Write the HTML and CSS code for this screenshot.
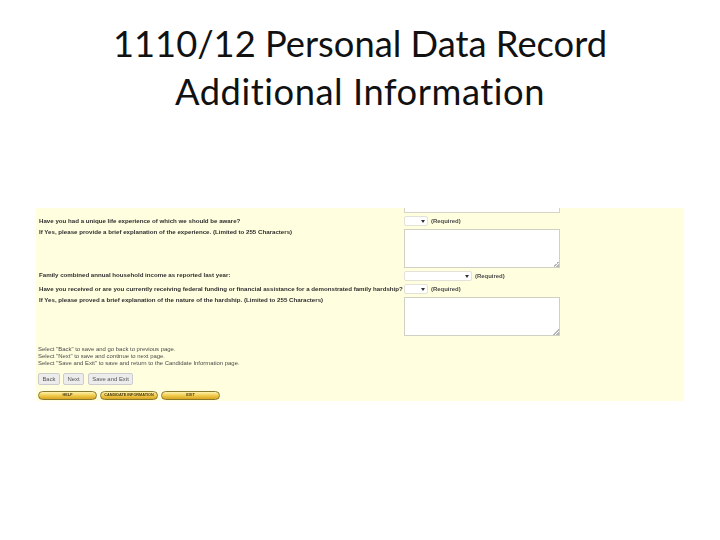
FILE: index.html
```html
<!doctype html>
<html>
  <head>
    <title>1110/12 Personal Data Record</title>
    <link rel="stylesheet" href="styles.css">
  </head>
  <body>
    <h1 class="title">1110/12 Personal Data Record<br><span class="subtitle">Additional Information</span></h1>
    <form class="panel">
      <div class="row row-stub">
        <div></div>
        <div class="stub"></div>
      </div>
      <div class="row row-select">
        <label>Have you had a unique life experience of which we should be aware?</label>
        <div class="field"><span class="pick short"><select></select></span><span class="req">(Required)</span></div>
      </div>
      <div class="row row-area">
        <label>If Yes, please provide a brief explanation of the experience. (Limited to 255 Characters)</label>
        <div class="box"><textarea></textarea></div>
      </div>
      <div class="row row-select row-tight">
        <label>Family combined annual household income as reported last year:</label>
        <div class="field"><span class="pick long"><select></select></span><span class="req">(Required)</span></div>
      </div>
      <div class="row row-select">
        <label>Have you received or are you currently receiving federal funding or financial assistance for a demonstrated family hardship?</label>
        <div class="field"><span class="pick short"><select></select></span><span class="req">(Required)</span></div>
      </div>
      <div class="row row-area">
        <label>If Yes, please proved a brief explanation of the nature of the hardship. (Limited to 255 Characters)</label>
        <div class="box"><textarea></textarea></div>
      </div>
      <div class="notes">
        <p>Select "Back" to save and go back to previous page.</p>
        <p>Select "Next" to save and continue to next page.</p>
        <p>Select "Save and Exit" to save and return to the Candidate Information page.</p>
      </div>
      <div class="buttons">
        <button type="button" class="btn back">Back</button>
        <button type="button" class="btn next">Next</button>
        <button type="button" class="btn save">Save and Exit</button>
      </div>
      <div class="links">
        <a class="pill">HELP</a>
        <a class="pill mid">CANDIDATE INFORMATION</a>
        <a class="pill">EXIT</a>
      </div>
    </form>
  </body>
</html>
```

FILE: styles.css
```css
html, body {
  margin: 0;
  height: 100%;
  background: #fff;
}
body {
  width: 720px;
  height: 540px;
  overflow: hidden;
}
.title {
  margin: 0;
  padding-top: 19px;
  height: 188px;
  box-sizing: border-box;
  text-align: center;
  font-family: Lato, "Open Sans", sans-serif;
  font-variant-ligatures: none;
  font-weight: 400;
  font-size: 36.3px;
  line-height: 48px;
  color: #111;
}
.subtitle {
  letter-spacing: 0.55px;
}
.panel {
  margin-left: 36px;
  width: 648px;
  height: 193px;
  box-sizing: border-box;
  margin-top: 20px;
  background: #ffffe0;
  font-family: "Liberation Sans", Arial, sans-serif;
  font-size: 5.95px;
  color: #444;
  filter: blur(0.4px);
}
.row {
  display: grid;
  grid-template-columns: 368px 1fr;
}
.row label {
  padding-left: 3px;
  font-size: 6.15px;
  font-weight: bold;
  color: #2e2e2e;
  white-space: nowrap;
}
.row-stub {
  height: 8px;
}
.stub {
  width: 156px;
  height: 5px;
  background: #fff;
  border: 1px solid #d4d4c8;
  border-top: none;
  box-sizing: border-box;
}
.row-select {
  height: 13px;
  line-height: 9px;
}
.row-tight {
  line-height: 7px;
}
.row-area {
  height: 42px;
}
.row-area label {
  line-height: 6px;
}
.field {
  display: flex;
  align-items: center;
  gap: 3px;
  height: 10px;
}
.pick {
  position: relative;
  display: block;
  height: 10px;
}
.pick::after {
  content: "";
  position: absolute;
  right: 3px;
  top: 4px;
  border: 2px solid transparent;
  border-top: 3px solid #333;
  border-bottom: none;
}
select {
  display: block;
  appearance: none;
  width: 100%;
  height: 10px;
  box-sizing: border-box;
  padding: 0;
  background: #fff;
  border: 1px solid #e2e2d8;
  border-radius: 2px;
}
.short {
  width: 24px;
}
.long {
  width: 68px;
}
.req {
  font-weight: bold;
  color: #4a4a4a;
}
.box {
  position: relative;
  width: 156px;
  height: 39px;
}
.box::after {
  content: "";
  position: absolute;
  right: 1px;
  bottom: 1px;
  width: 6px;
  height: 6px;
  background: linear-gradient(135deg, transparent 50%, #b5b5b5 50%, #b5b5b5 62%, #fff 62%, #fff 72%, #b5b5b5 72%);
}
textarea {
  display: block;
  width: 100%;
  height: 100%;
  box-sizing: border-box;
  margin: 0;
  padding: 0;
  background: #fff;
  border: 1px solid #d0d0c4;
  border-radius: 0;
  outline: none;
  resize: none;
}
.notes {
  margin-top: 7px;
  padding-left: 2px;
  line-height: 7px;
  color: #4a4a4a;
}
.notes p {
  margin: 0;
}
.buttons {
  display: flex;
  gap: 3px;
  margin-top: 6px;
  padding-left: 2px;
}
.btn {
  height: 12px;
  padding: 0;
  background: #ececec;
  border: 1px solid #ccc;
  border-radius: 2px;
  font-family: "Liberation Sans", Arial, sans-serif;
  font-size: 5.95px;
  color: #555;
}
.back {
  width: 22px;
}
.next {
  width: 21px;
}
.save {
  width: 45px;
  margin-left: 1px;
}
.links {
  display: flex;
  gap: 3px;
  margin-top: 6px;
  padding-left: 2px;
}
.pill {
  width: 59px;
  height: 9px;
  box-sizing: border-box;
  border: 1px solid #8a7a30;
  border-radius: 5px;
  background: linear-gradient(#fff3b0, #f2cf55 45%, #d9a520);
  font-size: 3.8px;
  font-weight: bold;
  line-height: 7px;
  text-align: center;
  color: #4a3a10;
  white-space: nowrap;
}
.mid {
  width: 58px;
}
```
